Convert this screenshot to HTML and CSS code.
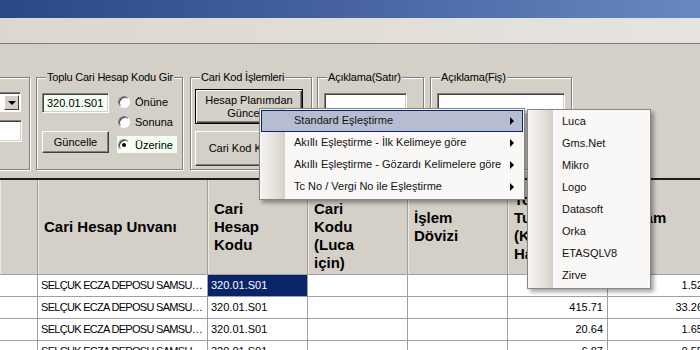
FILE: index.html
```html
<!DOCTYPE html>
<html lang="tr">
<head>
  <meta charset="UTF-8" />
  <meta name="viewport" content="width=device-width, initial-scale=1.0"/>
  <title>Cari Hesap Eşleştirme</title>
  <link rel="stylesheet" href="styles.css">
</head>
<body>
  <div class="window">
    <div class="titlebar"></div>
    <div class="menubar"></div>

    <div class="toolbar">
      <div class="group g-filter">
        <div class="combo"><span class="combo-btn"><span class="arrow-down"></span></span></div>
        <div class="textbox filter-text"></div>
      </div>

      <div class="group g-toplu">
        <span class="group-title">Toplu Cari Hesap Kodu Gir</span>
        <div class="col">
          <div class="textbox code">320.01.S01</div>
          <button class="btn btn-update">Güncelle</button>
        </div>
        <div class="radios">
          <label class="radio r1"><span class="circle"></span>Önüne</label>
          <label class="radio r2"><span class="circle"></span>Sonuna</label>
          <label class="radio r3 checked"><span class="circle"></span>Üzerine</label>
        </div>
      </div>

      <div class="group g-kod">
        <span class="group-title">Cari Kod İşlemleri</span>
        <button class="btn btn-big default">Hesap Planımdan<br>Güncelle</button>
        <button class="btn btn-big second">Cari Kod Kontrol</button>
      </div>

      <div class="group g-satir">
        <span class="group-title">Açıklama(Satır)</span>
        <div class="textbox note"></div>
      </div>

      <div class="group g-fis">
        <span class="group-title">Açıklama(Fiş)</span>
        <div class="textbox note"></div>
      </div>
    </div>

    <div class="grid">
      <div class="hcell"></div>
      <div class="hcell">Cari Hesap Unvanı</div>
      <div class="hcell">Cari<br>Hesap<br>Kodu</div>
      <div class="hcell low">Cari<br>Kodu<br>(Luca<br>için)</div>
      <div class="hcell">İşlem<br>Dövizi</div>
      <div class="hcell">Toplam<br>Tutar<br>(Kur<br>Hariç)</div>
      <div class="hcell">Toplam<br>KDV</div>

      <div class="cell"></div>
      <div class="cell name">SELÇUK ECZA DEPOSU SAMSU…</div>
      <div class="cell selected">320.01.S01</div>
      <div class="cell"></div>
      <div class="cell"></div>
      <div class="cell num">20.00</div>
      <div class="cell num">1.52</div>

      <div class="cell"></div>
      <div class="cell name">SELÇUK ECZA DEPOSU SAMSU…</div>
      <div class="cell">320.01.S01</div>
      <div class="cell"></div>
      <div class="cell"></div>
      <div class="cell num">415.71</div>
      <div class="cell num">33.26</div>

      <div class="cell"></div>
      <div class="cell name">SELÇUK ECZA DEPOSU SAMSU…</div>
      <div class="cell">320.01.S01</div>
      <div class="cell"></div>
      <div class="cell"></div>
      <div class="cell num">20.64</div>
      <div class="cell num">1.65</div>

      <div class="cell"></div>
      <div class="cell name">SELÇUK ECZA DEPOSU SAMSU…</div>
      <div class="cell">320.01.S01</div>
      <div class="cell"></div>
      <div class="cell"></div>
      <div class="cell num">6.87</div>
      <div class="cell num">0.55</div>
    </div>

    <!-- context menu -->
    <div class="menu main-menu">
      <div class="item active">Standard Eşleştirme<span class="arrow"></span></div>
      <div class="item">Akıllı Eşleştirme - İlk Kelimeye göre<span class="arrow"></span></div>
      <div class="item">Akıllı Eşleştirme - Gözardı Kelimelere göre<span class="arrow"></span></div>
      <div class="item">Tc No / Vergi No ile Eşleştirme<span class="arrow"></span></div>
    </div>

    <div class="menu sub-menu">
      <div class="item">Luca</div>
      <div class="item">Gms.Net</div>
      <div class="item">Mikro</div>
      <div class="item">Logo</div>
      <div class="item">Datasoft</div>
      <div class="item">Orka</div>
      <div class="item">ETASQLV8</div>
      <div class="item">Zirve</div>
    </div>
  </div>
</body>
</html>
```

FILE: styles.css
```css
* {
  box-sizing: border-box;
}
body {
  margin: 0;
  background: #d4d0c8;
  font-family: "Liberation Sans", Arial, sans-serif;
  font-size: 11px;
  color: #000;
  overflow: hidden;
}
.window {
  position: relative;
  width: 700px;
  height: 350px;
  overflow: hidden;
}
.titlebar {
  height: 18px;
  background: linear-gradient(90deg, #2a4886 0%, #4764a1 50%, #6788c0 100%);
}
.menubar {
  height: 26px;
  background: linear-gradient(90deg, #dbd8d0, #e6e4df);
  border-bottom: 1px solid #808080;
}

/* toolbar with group boxes */
.toolbar {
  display: flex;
  align-items: flex-start;
  height: 136px;
  padding-top: 33px;
  border-bottom: 2px solid #1c1c1c;
}
.group {
  position: relative;
  flex-shrink: 0;
  height: 93px;
  margin-left: 6px;
  border: 1px solid #808080;
  box-shadow: inset 1px 1px 0 #fff, 1px 1px 0 #fff;
}
.group-title {
  position: absolute;
  top: -7px;
  left: 9px;
  padding: 0 1px;
  line-height: 13px;
  background: #d4d0c8;
  white-space: nowrap;
  letter-spacing: -0.2px;
}
.textbox {
  background: #fff;
  border: 1px solid;
  border-color: #808080 #fff #fff #808080;
  box-shadow: inset 1px 1px 0 #404040, inset -1px -1px 0 #d4d0c8;
}
.btn {
  display: block;
  padding: 0;
  background: #d4d0c8;
  border: 1px solid;
  border-color: #fff #404040 #404040 #fff;
  box-shadow: inset -1px -1px 0 #808080;
  font: inherit;
  line-height: 13px;
  color: #000;
}
.btn.default {
  border: 1px solid #000;
  box-shadow: inset 1px 1px 0 #fff, inset -1px -1px 0 #404040, inset -2px -2px 0 #808080;
}

.g-filter {
  width: 42px;
  margin-left: -12px;
  display: flex;
  flex-direction: column;
  align-items: flex-end;
  padding: 14px 8px 0 0;
}
.combo {
  width: 40px;
  height: 20px;
  background: #fff;
  border: 1px solid;
  border-color: #808080 #fff #fff #808080;
  box-shadow: inset 1px 1px 0 #404040;
  display: flex;
  justify-content: flex-end;
  padding: 2px 1px 1px 2px;
}
.combo-btn {
  width: 15px;
  height: 15px;
  background: #d4d0c8;
  border: 1px solid;
  border-color: #fff #404040 #404040 #fff;
  display: flex;
  align-items: center;
  justify-content: center;
}
.arrow-down {
  border-top: 4px solid #000;
  border-left: 4px solid transparent;
  border-right: 4px solid transparent;
}
.filter-text {
  width: 40px;
  height: 22px;
  margin-top: 8px;
  margin-right: -1px;
}

.g-toplu {
  width: 147px;
  display: flex;
  padding: 15px 0 0 5px;
}
.col {
  width: 67px;
}
.code {
  height: 20px;
  padding: 0 4px;
  line-height: 18px;
  background: #f2fff2;
}
.btn-update {
  width: 67px;
  height: 22px;
  margin-top: 18px;
}
.radios {
  display: flex;
  flex-direction: column;
  margin: -1px 0 0 8px;
}
.radio {
  display: flex;
  align-items: center;
  width: 60px;
  padding-left: 1px;
}
.r1 { height: 19px; }
.r2 { height: 21px; }
.r3 {
  height: 17px;
  margin-top: 4px;
  background: #f2fff2;
}
.circle {
  position: relative;
  width: 12px;
  height: 12px;
  margin-right: 5px;
  border-radius: 50%;
  background: #fff;
  border: 1px solid;
  border-color: #808080 #fff #fff #808080;
  box-shadow: inset 1px 1px 0 #404040;
}
.checked .circle::after {
  content: "";
  position: absolute;
  left: 3px;
  top: 3px;
  width: 4px;
  height: 4px;
  border-radius: 50%;
  background: #000;
}

.g-kod {
  width: 122px;
  margin-left: 7px;
  padding: 11px 0 0 4px;
}
.btn-big {
  width: 108px;
  height: 35px;
}
.btn-big.second {
  margin-top: 7px;
}

.g-satir {
  width: 107px;
  margin-left: 5px;
  padding: 15px 0 0 6px;
}
.g-satir .note {
  width: 83px;
  height: 20px;
}
.g-fis {
  width: 142px;
  padding: 15px 0 0 6px;
}
.g-fis .note {
  width: 128px;
  height: 20px;
}

/* data grid */
.grid {
  display: grid;
  grid-template-columns: 38px 170px repeat(5, 100px);
  grid-template-rows: 95px repeat(4, 22px);
  width: 738px;
  background: #fff;
}
.hcell {
  display: flex;
  flex-direction: column;
  justify-content: center;
  padding-left: 6px;
  background: #d4d0c8;
  border-right: 1px solid #a0a0a0;
  border-bottom: 1px solid #a0a0a0;
  box-shadow: inset 1px 0 0 #ece9e2;
  font-size: 15px;
  font-weight: bold;
  line-height: 18px;
  white-space: nowrap;
  overflow: hidden;
}
.hcell.low {
  padding-top: 18px;
}
.cell {
  padding: 0 4px 0 3px;
  border-right: 1px solid #a0a0a0;
  border-bottom: 1px solid #a0a0a0;
  line-height: 21px;
  white-space: nowrap;
  overflow: hidden;
}
.cell.name {
  letter-spacing: -0.7px;
}
.cell.num {
  text-align: right;
}
.cell.selected {
  background: #0a246a;
  color: #fff;
}

/* popup menus */
.menu {
  position: absolute;
  padding: 1px;
  border: 1px solid #868686;
  background: linear-gradient(90deg, #f6f5f2 0, #e6e3dd 14px, #d5d1c9 25px, #f9f8f6 25px);
  box-shadow: 3px 3px 4px rgba(0, 0, 0, 0.35);
}
.main-menu {
  left: 259px;
  top: 108px;
  width: 266px;
}
.sub-menu {
  left: 527px;
  top: 109px;
  width: 124px;
}
.item {
  position: relative;
  height: 22px;
  padding-left: 33px;
  line-height: 20px;
  white-space: nowrap;
  color: #111;
}
.item.active {
  background: #b6bdd2;
  border: 1px solid #0a246a;
  padding-left: 32px;
  line-height: 18px;
}
.arrow {
  position: absolute;
  right: 9px;
  top: 7px;
  border-left: 4px solid #000;
  border-top: 4px solid transparent;
  border-bottom: 4px solid transparent;
}
.item.active .arrow {
  right: 8px;
  top: 6px;
}
```
